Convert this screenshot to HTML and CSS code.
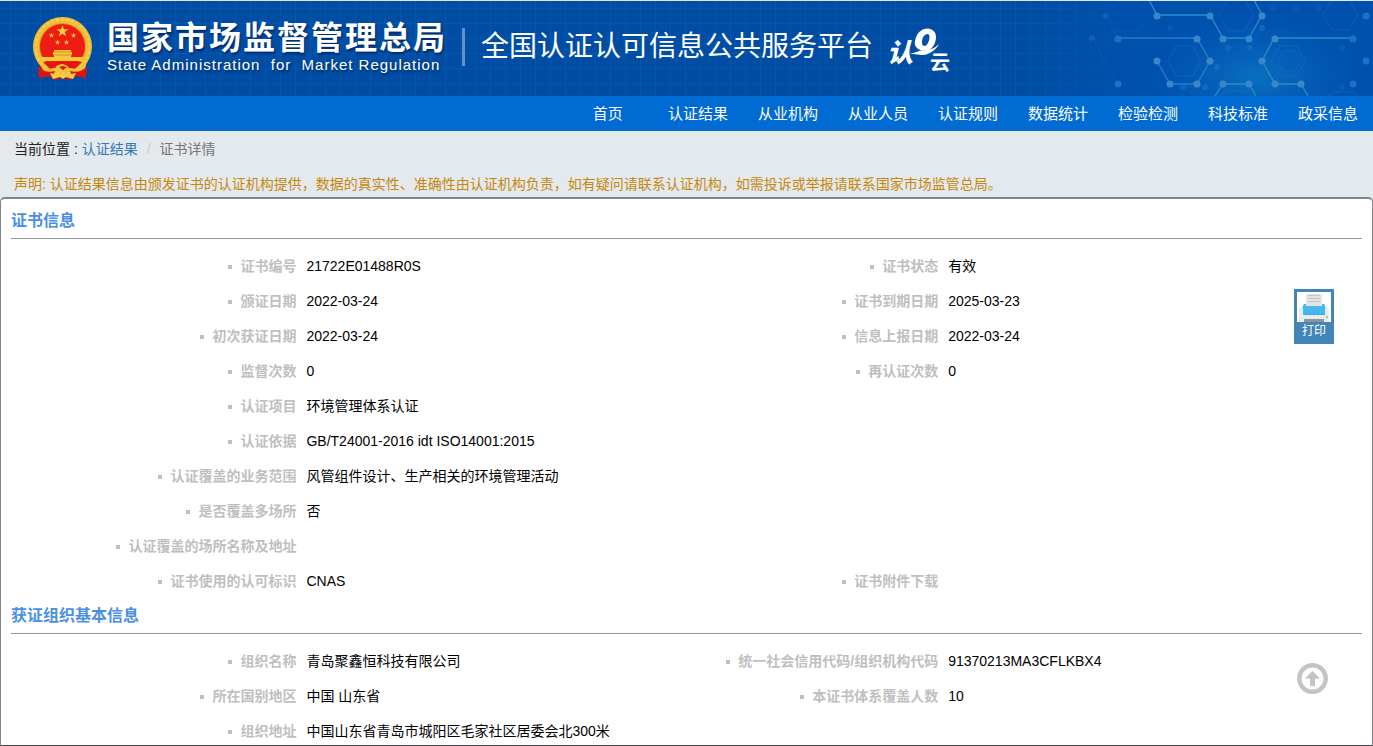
FILE: index.html
```
<!DOCTYPE html>
<html lang="zh-CN">
<head>
    <meta charset="utf-8">
    <title>全国认证认可信息公共服务平台</title>
    <link rel="stylesheet" href="styles.css">
</head>
<body>
    <header class="header">
        <svg class="molecules" width="333" height="95" viewBox="0 0 333 95" aria-hidden="true">
            <defs>
                <radialGradient id="glow">
                    <stop offset="0" stop-color="#0a78c4" stop-opacity=".8"/>
                    <stop offset="1" stop-color="#0a60bc" stop-opacity="0"/>
                </radialGradient>
            </defs>
            <ellipse cx="215" cy="76" rx="110" ry="66" fill="url(#glow)"/>
            <g fill="none" stroke="#1476bd" stroke-opacity=".5">
                <path d="M128 60l8-15h17l8 15-8 15h-17zM231 60l9-15h17l8 15-8 15h-17zM237 60l6-10h12l6 10-6 10h-12zM179 14l9-16h17l8 16-8 16h-17zM283 14l9-15h17l9 15-9 15h-17zM180 95l8-5h18l8 5M288 95l6-4h18l6 4"/>
                <path d="M188 46h23l9-18M178 66l-13 20h-22M68 14l10-14h20l10 14-10 16h-20zM53 37l10 20 15 26M65 14l13 24" stroke-opacity=".3"/>
            </g>
            <g fill="none" stroke="#278fc5" stroke-width="1.3">
                <path d="M78 37h79l13 23-13 23h-27l-13-23" stroke-opacity=".8"/>
                <path d="M109-1l8 15h53l13 23h26l13-23-8-15M175 95l8-12h26l7 12M313 37h-79l-12 23 13 23h26l7 12"/>
            </g>
            <g fill="#1674c4">
                <circle cx="65" cy="15" r="3" opacity=".5"/><circle cx="52" cy="37" r="3" opacity=".5"/>
                <circle cx="78" cy="38" r="3.5"/><circle cx="78" cy="83" r="3.5"/>
                <circle cx="188" cy="47" r="3" opacity=".6"/><circle cx="210" cy="47" r="3" opacity=".6"/>
                <circle cx="222" cy="27" r="3" opacity=".6"/><circle cx="177" cy="66" r="3" opacity=".6"/>
                <circle cx="165" cy="86" r="3" opacity=".6"/><circle cx="143" cy="86" r="3" opacity=".6"/>
                <circle cx="233" cy="7" r="3" opacity=".3"/><circle cx="256" cy="7" r="3" opacity=".3"/>
                <circle cx="279" cy="7" r="3" opacity=".3"/><circle cx="302" cy="47" r="3" opacity=".3"/>
                <circle cx="302" cy="86" r="3" opacity=".3"/><circle cx="130" cy="27" r="3" opacity=".3"/>
                <circle cx="326" cy="15" r="3.5"/><circle cx="313" cy="38" r="3.5"/>
                <circle cx="326" cy="60" r="3.5"/><circle cx="313" cy="83" r="3.5"/>
            </g>
            <g fill="#3a86c8">
                <circle cx="117" cy="15" r="3.5"/><circle cx="170" cy="15" r="3.5"/><circle cx="222" cy="15" r="3.5"/>
                <circle cx="157" cy="38" r="3.5"/><circle cx="183" cy="38" r="3.5"/><circle cx="209" cy="38" r="3.5"/>
                <circle cx="235" cy="38" r="3.5"/><circle cx="117" cy="60" r="3.5"/><circle cx="170" cy="60" r="3.5"/>
                <circle cx="222" cy="60" r="3.5"/><circle cx="130" cy="83" r="3.5"/><circle cx="157" cy="83" r="3.5"/>
                <circle cx="183" cy="83" r="3.5"/><circle cx="209" cy="83" r="3.5"/><circle cx="235" cy="83" r="3.5"/>
                <circle cx="261" cy="83" r="3.5"/>
            </g>
        </svg>
        <svg class="emblem" width="60" height="64" viewBox="0 0 60 64" role="img" aria-label="国徽">
            <path d="M8 42L6 61l10-2 6 4 8-2 7 2 6-4 10 2-2-19z" fill="#d5100f"/>
            <circle cx="29.500" cy="29.500" r="29.500" fill="#f0bd37"/>
            <circle cx="29.500" cy="29.500" r="27" fill="none" stroke="#f8d050" stroke-width="2" stroke-dasharray="3 2"/>
            <circle cx="29.500" cy="29.500" r="23.500" fill="#d99a22"/>
            <circle cx="29.500" cy="29.500" r="22.500" fill="#ee1c13"/>
            <g fill="#f8c93c">
                <path d="M29.500 8l1.500 4.200h4.500l-3.600 2.700 1.300 4.400-3.700-2.600-3.700 2.600 1.300-4.400-3.600-2.700H28z"/>
                <path id="star" d="M18.500 15.500l.7 2h2.100l-1.700 1.200.7 2-1.800-1.200-1.800 1.200.7-2-1.700-1.200h2.100z"/>
                <use href="#star" x="22"/>
                <use href="#star" x="6" y="7"/>
                <use href="#star" x="15" y="7"/>
                <path d="M21 33h17v2h1v3h-1v2h2v1H19v-1h2v-2h-1v-3h1z"/>
                <path d="M8 40h43l-2 4H10z"/>
            </g>
            <path d="M10 45h39l-7 7-12-2-13 2z" fill="#e3190f"/>
            <path d="M21 35h17M20 38h19" stroke="#d88c22"/>
            <path d="M5 43c5 8 11 10 17 8 2-3 5-4 7-4s5 1 7 4c6 2 12 0 18-8l-2 10c-6 4-11 4-17 1-2 1-5 1-7 0-6 3-12 3-18-1z" fill="#f3c23c"/>
            <path d="M5 49c4 5 10 7 17 5l-3 7-3-2-10 2zM54 49c-4 5-10 7-17 5l3 7 3-2 10 2zM26 50l4-1 4 1-4 3z" fill="#d9170f"/>
            <path d="M17 56l10 2 3-2 3 2 10-2-3 6-7-2-3 2-3-2-7 2z" fill="#f3cf45"/>
        </svg>
        <div class="agency">
            <div class="agency-cn">国家市场监督管理总局</div>
            <div class="agency-en">State Administration &nbsp;for&nbsp; Market Regulation</div>
        </div>
        <h1 class="platform">全国认证认可信息公共服务平台</h1>
        <svg class="cloud-logo" width="64" height="48" viewBox="0 0 64 48" role="img" aria-label="认e云">
            <g fill="#fff">
                <text class="logo-ren" x="-1" y="34">认</text>
                <path fill-rule="evenodd" d="M36 1c7-2 12 2 12 8 0 6-3 11-8 14-3-1-6-1-8-1-4-2-6-5-5-9 1-6 4-10 9-12zM40 6c-4 0-6 4-6 8 0 3 1 4 3 4 4-1 6-11 3-12z"/>
                <path d="M22 26c5-1 8-3 12-4 6 1 12-1 17-6-3 6-10 11-17 11-4 0-6-1-12-1z"/>
                <text class="logo-yun" x="42" y="42">云</text>
            </g>
        </svg>
    </header>

    <nav class="nav">
        <a href="#" class="home">首页</a>
        <a href="#">认证结果</a>
        <a href="#">从业机构</a>
        <a href="#">从业人员</a>
        <a href="#">认证规则</a>
        <a href="#">数据统计</a>
        <a href="#">检验检测</a>
        <a href="#">科技标准</a>
        <a href="#">政采信息</a>
    </nav>

    <div class="breadcrumb">当前位置 : <a href="#">认证结果</a><span class="sep">/</span><span class="current">证书详情</span></div>
    <p class="notice">声明: 认证结果信息由颁发证书的认证机构提供，数据的真实性、准确性由认证机构负责，如有疑问请联系认证机构，如需投诉或举报请联系国家市场监管总局。</p>

    <main class="panel">
        <h2>证书信息</h2>
        <table class="info">
            <colgroup><col class="col-label"><col class="col-value"><col class="col-label"><col></colgroup>
            <tr><th>证书编号</th><td>21722E01488R0S</td><th>证书状态</th><td>有效</td></tr>
            <tr><th>颁证日期</th><td>2022-03-24</td><th>证书到期日期</th><td>2025-03-23</td></tr>
            <tr><th>初次获证日期</th><td>2022-03-24</td><th>信息上报日期</th><td>2022-03-24</td></tr>
            <tr><th>监督次数</th><td>0</td><th>再认证次数</th><td>0</td></tr>
            <tr><th>认证项目</th><td colspan="3">环境管理体系认证</td></tr>
            <tr><th>认证依据</th><td colspan="3">GB/T24001-2016 idt ISO14001:2015</td></tr>
            <tr><th>认证覆盖的业务范围</th><td colspan="3">风管组件设计、生产相关的环境管理活动</td></tr>
            <tr><th>是否覆盖多场所</th><td colspan="3">否</td></tr>
            <tr><th>认证覆盖的场所名称及地址</th><td colspan="3"></td></tr>
            <tr><th>证书使用的认可标识</th><td>CNAS</td><th>证书附件下载</th><td></td></tr>
        </table>

        <h2>获证组织基本信息</h2>
        <table class="info">
            <colgroup><col class="col-label"><col class="col-value"><col class="col-label"><col></colgroup>
            <tr><th>组织名称</th><td>青岛聚鑫恒科技有限公司</td><th>统一社会信用代码/组织机构代码</th><td>91370213MA3CFLKBX4</td></tr>
            <tr><th>所在国别地区</th><td>中国 山东省</td><th>本证书体系覆盖人数</th><td>10</td></tr>
            <tr><th>组织地址</th><td colspan="3">中国山东省青岛市城阳区毛家社区居委会北300米</td></tr>
        </table>
    </main>

    <button type="button" class="print" onclick="window.print()">
        <svg width="34" height="30" viewBox="0 0 34 30" aria-hidden="true">
            <path fill="#fff" d="M0 0h34v30H0z"/>
            <path fill="#e1e3e5" d="M3 17l4-5h20l4 5z"/>
            <path fill="#e9ebec" d="M2 17h30v13H2z"/>
            <path fill="#e4e5e7" d="M10 2h14l1 1v11H9V3z"/>
            <path stroke="#c3c5c7" d="M11 3.500h12M11 6.500h12M11 9.500h12"/>
            <path fill="#45b8ec" d="M7 12h2v2h16v-2h2l1 2v9H6v-9z"/>
            <path stroke="#31a0d6" stroke-dasharray="2 2" d="M8 22.500h18"/>
            <path fill="#8f9396" d="M7 27h20v3H7z"/>
            <path fill="#8bd58a" d="M29 24h2v2h-2z"/>
        </svg>
        打印
    </button>
    <button type="button" class="to-top" aria-label="返回顶部" onclick="window.scrollTo(0, 0)">
        <svg width="31" height="31" viewBox="0 0 31 31" aria-hidden="true">
            <circle cx="15.500" cy="15.500" r="13.200" fill="none" stroke="#c4c4c4" stroke-width="4.500"/>
            <path d="M15.500 8l7.500 7.500h-5V23h-5v-7.500H8z" fill="#c4c4c4"/>
        </svg>
    </button>
</body>
</html>
```
FILE: styles.css
```
* { box-sizing: border-box; }
body {
    display: flex;
    flex-direction: column;
    height: 100vh;
    margin: 0;
    overflow: hidden;
    background: #e4e9ed;
    color: #000;
    font: 14px/20px "Liberation Sans", "Noto Sans CJK SC", sans-serif;
}
a { text-decoration: none; }

/* top banner */
.header {
    position: relative;
    display: flex;
    flex-shrink: 0;
    align-items: center;
    height: 96px;
    padding-left: 33px;
    border-top: 1px solid #e4e9ed;
    color: #fff;
    background:
        linear-gradient(90deg, transparent 75%, #0050ae 84%),
        repeating-linear-gradient(90deg, transparent 0 10px, #0057ae 10px 11px, transparent 11px 15px),
        repeating-linear-gradient(transparent 0 7px, #0057ae 7px 8px, transparent 8px 15px),
        #004da3;
}
.molecules { position: absolute; top: 0; right: 0; }
.emblem { flex-shrink: 0; }
.agency {
    margin-left: 14px;
    padding-bottom: 2px;
    white-space: nowrap;
    text-shadow: 1px 2px 2px #002a66;
}
.agency-cn { font-size: 32px; line-height: 34px; font-weight: bold; letter-spacing: 2px; }
.agency-en { font-size: 15px; line-height: 20px; letter-spacing: 1px; }
.platform {
    margin: 0 0 4px 15px;
    padding-left: 16px;
    border-left: 3px solid #5f93cb;
    font-size: 28px;
    line-height: 38px;
    font-weight: normal;
    white-space: nowrap;
}
.cloud-logo { flex-shrink: 0; margin: 6px 0 0 15px; }
.logo-ren { font: italic 900 26px "Noto Sans CJK SC", sans-serif; }
.logo-yun { font: bold 20px "Noto Sans CJK SC", sans-serif; }

.nav {
    display: flex;
    flex-shrink: 0;
    justify-content: flex-end;
    background: #006bd2;
}
.nav a { padding: 0 15px; color: #fff; font-size: 15px; line-height: 35px; }
.nav .home { margin-right: 15px; }

.breadcrumb { padding: 8px 14px; color: #222; }
.breadcrumb a { color: #337ab7; }
.breadcrumb .sep { padding: 0 9px; color: #ccc; }
.breadcrumb .current { color: #777; }
.notice { margin: 0; padding: 7px 14px 3px; color: #c4880f; }

/* certificate details */
.panel {
    flex: 1;
    min-height: 0;
    padding: 5px 10px 0;
    overflow: hidden;
    background: #fff;
    border: 1px solid #808387;
    border-top-width: 2px;
    border-bottom-color: #43474c;
    border-radius: 5px 5px 0 0;
}
.panel h2 {
    margin: 0 0 10px;
    border-bottom: 1px solid #999;
    color: #4a90e2;
    font-size: 16px;
    line-height: 34px;
}
.info { width: 100%; table-layout: fixed; border-collapse: collapse; }
.col-label { width: 21.5%; }
.col-value { width: 26%; }
.info th, .info td { height: 35px; padding: 0 5px 2px; white-space: nowrap; }
.info th { color: #bfbfbf; text-align: right; }
.info th::before {
    content: "";
    display: inline-block;
    width: 4px;
    height: 4px;
    margin-right: 8px;
    vertical-align: middle;
    background: #bfbfbf;
}

/* floating buttons */
.print {
    position: fixed;
    top: 289px;
    right: 39px;
    width: 40px;
    padding: 3px;
    border: 0;
    background: #4185b9;
    color: #fff;
    font: 12px/19px "Liberation Sans", "Noto Sans CJK SC", sans-serif;
    cursor: pointer;
}
.print svg { display: block; }
.to-top {
    position: fixed;
    right: 45px;
    bottom: 52px;
    padding: 0;
    border: 0;
    background: none;
    cursor: pointer;
}
.to-top svg { display: block; }
```
